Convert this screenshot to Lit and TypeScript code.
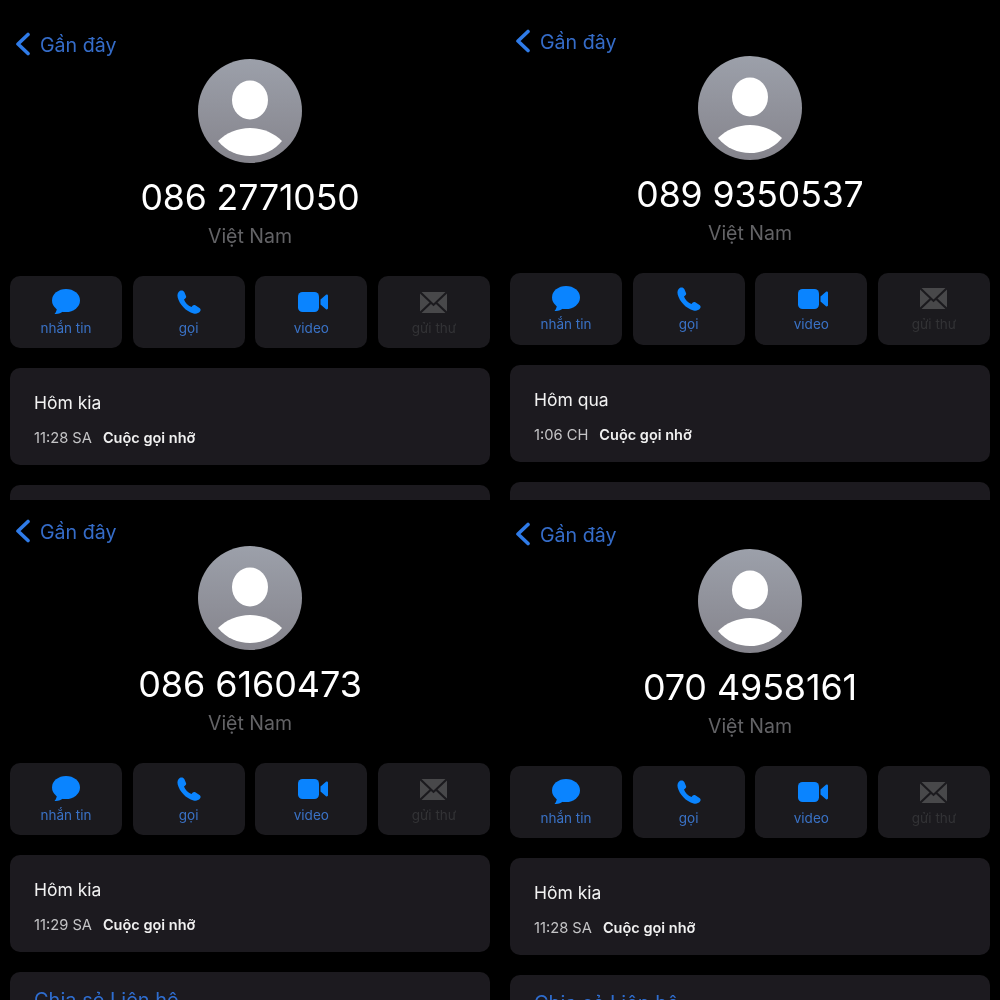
import { LitElement, html, css, svg } from "lit";
import { customElement } from "lit/decorators.js";

type Call = { number: string; day: string; time: string; top: number; size: number; shift: number; share: string };

const calls: Call[] = [
  { number: "086 2771050", day: "Hôm kia", time: "11:28 SA", top: 33, size: 35.6, shift: 13, share: "" },
  { number: "089 9350537", day: "Hôm qua", time: "1:06 CH", top: 29.5, size: 35.6, shift: 13, share: "" },
  { number: "086 6160473", day: "Hôm kia", time: "11:29 SA", top: 20, size: 36, shift: 12, share: "Chia sẻ Liên hệ" },
  { number: "070 4958161", day: "Hôm kia", time: "11:28 SA", top: 23, size: 35.9, shift: 12, share: "Chia sẻ Liên hệ" },
];

const chevron = html`<svg class="chev" viewBox="0 0 16 24" width="16" height="24"><path d="M13 2.500 L3 12 L13 21.500" fill="none" stroke="#2f7be8" stroke-width="3.600" stroke-linecap="round" stroke-linejoin="round"/></svg>`;

const avatar = html`<svg class="avatar" viewBox="0 0 104 104" width="104" height="104">
  <defs><linearGradient id="g" x1="0" y1="0" x2="0" y2="1"><stop offset="0" stop-color="#9ca0aa"/><stop offset="1" stop-color="#85848c"/></linearGradient></defs>
  <circle cx="52" cy="52" r="52" fill="url(#g)"/>
  <ellipse cx="52" cy="41" rx="18" ry="19.5" fill="#fff"/>
  <path d="M20 82 C28 74 40 69 52 69 C64 69 76 74 84 82 C76 92 64 97 52 97 C40 97 28 92 20 82Z" fill="#fff"/>
</svg>`;

const msgIcon = svg`<ellipse cx="14" cy="11.500" rx="14" ry="11.500" fill="#0a84ff"/><path d="M5 18C5 21 4 23.500 2.500 25C6 25.500 9 24 11.500 22Z" fill="#0a84ff"/>`;
const phoneIcon = svg`<path d="M3 .8C5 0 6.500 .5 7.300 2L9 6C9.500 7 9 8 8 8.700L7 9.500C8 12.500 11 15.700 14.500 17L15.500 15.800C16.300 15 17.300 14.800 18.300 15.300L22.500 18C23.800 19 24 20.300 23 21.500C21.500 23.500 19 24 16.500 23.400C9 21.500 2.500 14.500 .7 7.500C0 4.500 .8 2 3 .8Z" fill="#0a84ff"/>`;
const videoIcon = svg`<rect x="0" y="0" width="21" height="20" rx="4.500" fill="#0a84ff"/><path d="M22.500 7.500 28 2.800c.8-.7 2-.1 2 .9v12.600c0 1-1.200 1.600-2 .9l-5.500-4.700Z" fill="#0a84ff"/>`;
const mailIcon = svg`<path d="M1.500 0 13.500 11.500 25.500 0ZM0 1.500V19.500L9.500 10.500ZM27 1.500V19.500L17.500 10.500ZM1.500 21H25.500L16 12 13.500 14.300 11 12Z" fill="#48484a"/>`;

const actions = [
  { label: "nhắn tin", w: 28, h: 26, box: "0 0 28 26", icon: msgIcon, off: false },
  { label: "gọi", w: 24, h: 24, box: "0 0 24 24", icon: phoneIcon, off: false },
  { label: "video", w: 34, h: 20, box: "-4 0 34 20", icon: videoIcon, off: false },
  { label: "gửi thư", w: 27, h: 21, box: "0 0 27 21", icon: mailIcon, off: true },
];

@customElement("app-root")
export class AppRoot extends LitElement {
  static styles = css`
    :host { display: block; width: 1000px; height: 1000px; background: #000; font-family: Inter, "Noto Sans", sans-serif; overflow: hidden; }
    .grid { display: grid; grid-template-columns: 500px 500px; grid-template-rows: 500px 500px; filter: blur(0.45px); }
    .panel { overflow: hidden; box-sizing: border-box; padding-left: 10px; padding-right: 10px; display: flex; flex-direction: column; }
    .nav { display: flex; align-items: center; height: 22px; flex: none; padding-left: 5px; gap: 9px; color: #356cc8; font-size: 19.600px; }
    .nav span { padding-top: 2px; }
    .chev { flex: none; }
    .avatar { display: block; flex: none; margin: 4px auto 0; }
    .number { flex: none; height: 44px; line-height: 44px; text-align: center; color: #fff; font-weight: 400; letter-spacing: -0.1px; }
    .country { flex: none; height: 26px; line-height: 26px; text-align: center; color: #636366; font-size: 19.500px; }
    .actions { flex: none; margin-top: 27px; display: grid; grid-template-columns: repeat(4, 112px); justify-content: space-between; }
    .action { height: 72px; box-sizing: border-box; border-radius: 10px; background: #1b1a1e; display: flex; flex-direction: column; align-items: center; }
    .iconbox { height: 26px; margin-top: 13px; display: flex; align-items: center; justify-content: center; }
    .label { margin-top: 2.500px; font-size: 13.500px; line-height: 20px; color: #3a72c6; }
    .label.off { color: #333336; }
    .card { flex: none; box-sizing: border-box; margin-top: 20px; height: 97px; border-radius: 10px; background: #1c1a1f; padding: 24px 24px 0; }
    .day { font-size: 17.500px; line-height: 22px; color: #f2f2f2; }
    .row { display: flex; gap: 11px; margin-top: 14px; line-height: 20px; }
    .time { color: #c4c4c6; font-size: 14.700px; }
    .status { color: #f0f0f0; font-weight: 600; font-size: 14.500px; }
    .share { flex: none; box-sizing: border-box; margin-top: 20px; height: 60px; border-radius: 10px; background: #1c1a1f; padding: 16px 24px 0; color: #2f6ed0; font-size: 20px; line-height: 24px; }
  `;

  render() {
    return html`<div class="grid">
      ${calls.map(
        (c) => html`<section class="panel" style="padding-top:${c.top}px">
          <div class="nav">${chevron}<span>Gần đây</span></div>
          ${avatar}
          <div class="number" style="font-size:${c.size}px;margin-top:${c.shift}px">${c.number}</div>
          <div class="country" style="margin-top:${16 - c.shift}px">Việt Nam</div>
          <div class="actions">
            ${actions.map(
              (a) => html`<div class="action">
                <div class="iconbox"><svg width=${a.w} height=${a.h} viewBox=${a.box}>${a.icon}</svg></div>
                <div class="label ${a.off ? "off" : ""}">${a.label}</div>
              </div>`
            )}
          </div>
          <div class="card">
            <div class="day">${c.day}</div>
            <div class="row"><span class="time">${c.time}</span><span class="status">Cuộc gọi nhỡ</span></div>
          </div>
          <div class="share">${c.share}</div>
        </section>`
      )}
    </div>`;
  }
}
